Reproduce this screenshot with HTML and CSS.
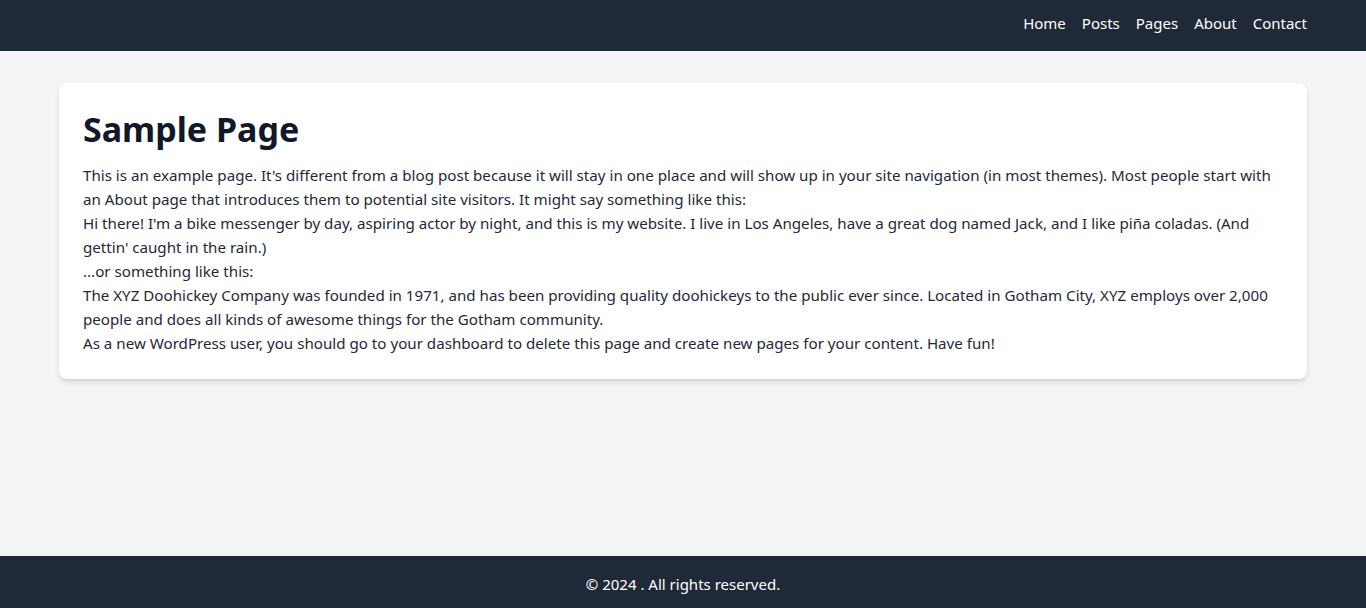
FILE: index.html
```html
<!DOCTYPE html>
<html lang="en">
<head>
<meta charset="utf-8">
<title>Sample Page</title>
<link rel="stylesheet" href="styles.css">
</head>
<body>
<div class="page">
  <header class="topbar">
    <div class="container topbar-inner">
      <nav class="nav">
        <a href="#">Home</a>
        <a href="#">Posts</a>
        <a href="#">Pages</a>
        <a href="#">About</a>
        <a href="#">Contact</a>
      </nav>
    </div>
  </header>
  <main class="main">
    <div class="container">
      <article class="card">
        <h1 class="title">Sample Page</h1>
        <div class="content">
          <p>This is an example page. It's different from a blog post because it will stay in one place and will show up in your site navigation (in most themes). Most people start with an About page that introduces them to potential site visitors. It might say something like this:</p>
          <p>Hi there! I'm a bike messenger by day, aspiring actor by night, and this is my website. I live in Los Angeles, have a great dog named Jack, and I like piña coladas. (And gettin' caught in the rain.)</p>
          <p>...or something like this:</p>
          <p>The XYZ Doohickey Company was founded in 1971, and has been providing quality doohickeys to the public ever since. Located in Gotham City, XYZ employs over 2,000 people and does all kinds of awesome things for the Gotham community.</p>
          <p>As a new WordPress user, you should go to your dashboard to delete this page and create new pages for your content. Have fun!</p>
        </div>
      </article>
    </div>
  </main>
  <footer class="footer">
    <p>© 2024 . All rights reserved.</p>
  </footer>
</div>
</body>
</html>
```

FILE: styles.css
```css
* { box-sizing: border-box; }
html, body { margin: 0; padding: 0; }
body {
  font-family: "Noto Sans", "Open Sans", sans-serif;
  font-size: 15px;
  line-height: 24px;
  background: #f3f4f6;
  color: #1f2937;
}
.page {
  min-height: 100vh;
  display: flex;
  flex-direction: column;
}
.container {
  max-width: 1280px;
  margin: 0 auto;
  padding: 0 16px;
  width: 100%;
}
.topbar {
  background: #1f2937;
  height: 51px;
}
.topbar-inner {
  display: flex;
  justify-content: flex-end;
  padding-top: 11px;
}
.nav {
  display: flex;
  gap: 16px;
}
.nav a {
  color: #ffffff;
  text-decoration: none;
  font-size: 15px;
  line-height: 24px;
}
.main {
  flex: 1;
  padding-top: 32px;
}
.card {
  background: #ffffff;
  border-radius: 8px;
  padding: 24px;
  box-shadow: 0 4px 6px -1px rgba(0,0,0,0.1), 0 2px 4px -2px rgba(0,0,0,0.1);
}
.title {
  margin: 0 0 16px;
  padding-top: 2px;
  height: 40px;
  font-size: 34px;
  line-height: 40px;
  font-weight: 700;
  color: #111827;
}
.content {
  font-size: 15.15px;
}
.content p {
  margin: 0;
}
.footer {
  background: #1f2937;
  color: #ffffff;
  text-align: center;
  height: 52px;
  padding-top: 16px;
}
.footer p { margin: 0; }
```
